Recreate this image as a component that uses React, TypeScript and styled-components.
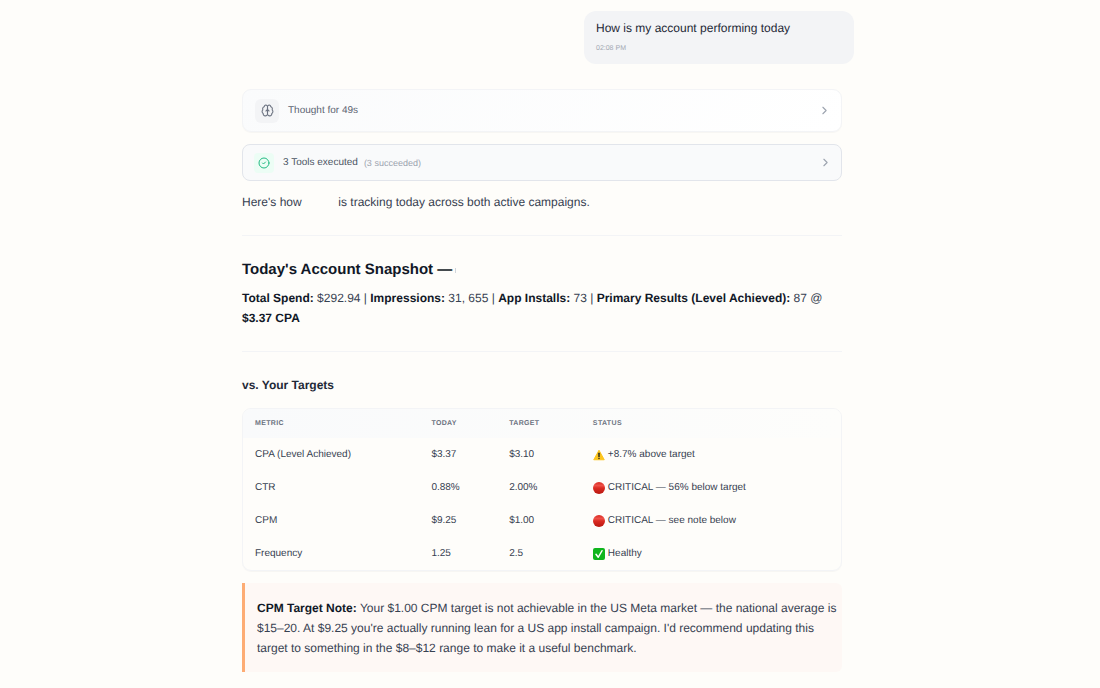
import React from "react";
import styled, { createGlobalStyle } from "styled-components";

const GlobalStyle = createGlobalStyle`
  *, *::before, *::after { box-sizing: border-box; }
  body {
    margin: 0;
    background: #fefdfa;
    color: #374151;
    font-family: "Liberation Sans", Arial, sans-serif;
    text-rendering: geometricPrecision;
  }
`;

const Page = styled.main`
  display: flex;
  justify-content: center;
  padding: 11px 16px 16px 12px;
`;

const Conversation = styled.div`
  display: flex;
  flex-direction: column;
  width: 100%;
  max-width: 612px;
`;

const UserMessage = styled.div`
  align-self: flex-end;
  width: 270px;
  max-width: 100%;
  padding: 8px 12px 9px;
  border-radius: 12px;
  background: #f3f4f6;
`;

const UserText = styled.p`
  margin: 0;
  font-size: 12px;
  line-height: 18px;
  color: #1f2937;
`;

const Timestamp = styled.time`
  display: block;
  margin-top: 6px;
  font-size: 7px;
  line-height: 12px;
  color: #a3a8b3;
`;

const Reply = styled.article`
  display: flex;
  flex-direction: column;
  margin: 25px 12px 0 0;
`;

const Steps = styled.div`
  display: flex;
  flex-direction: column;
  gap: 12px;
`;

const Step = styled.button<{ $solid?: boolean }>`
  display: flex;
  align-items: center;
  width: 100%;
  height: ${(p) => (p.$solid ? 37 : 43)}px;
  padding: ${(p) => (p.$solid ? "0 9px 0 11px" : "0 10px 0 12px")};
  border: 1px solid ${(p) => (p.$solid ? "#e2e5eb" : "#f3f4f6")};
  border-radius: ${(p) => (p.$solid ? 8 : 9)}px;
  background: ${(p) => (p.$solid ? "#f9fafb" : "linear-gradient(135deg, #fafbfc, #ffffff)")};
  box-shadow: ${(p) => (p.$solid ? "none" : "0 1px 1px rgba(0, 0, 0, 0.03)")};
  font: inherit;
  text-align: left;
  text-rendering: inherit;
  cursor: pointer;
`;

const StepIcon = styled.span<{ $success?: boolean }>`
  display: flex;
  flex: none;
  align-items: center;
  justify-content: center;
  width: ${(p) => (p.$success ? 20 : 24)}px;
  height: ${(p) => (p.$success ? 20 : 24)}px;
  border-radius: ${(p) => (p.$success ? 4 : 6)}px;
  background: ${(p) => (p.$success ? "#ecfdf5" : "#f3f4f6")};
  color: ${(p) => (p.$success ? "#22ba83" : "#6b7280")};
`;

const StepLabel = styled.span<{ $strong?: boolean }>`
  margin-left: 9px;
  font-size: 10px;
  line-height: 14px;
  color: ${(p) => (p.$strong ? "#4b5563" : "#5b6472")};
`;

const StepDetail = styled.span`
  margin-left: 6px;
  font-size: 9px;
  line-height: 14px;
  color: #9ca3af;
`;

const StepArrow = styled.span`
  display: flex;
  margin-left: auto;
  color: #9ca3af;
`;

const Paragraph = styled.p`
  margin: 0;
  font-size: 12px;
  line-height: 20px;
  color: #374151;

  strong {
    color: #111827;
  }
`;

const Intro = styled(Paragraph)`
  margin-top: 11px;
`;

const BlankName = styled.span`
  display: inline-block;
  width: 30px;
`;

const Divider = styled.hr`
  width: 100%;
  height: 1px;
  margin: 23px 0;
  border: 0;
  background: #f3f4f6;
`;

const SectionTitle = styled.h2`
  display: flex;
  align-items: center;
  gap: 3px;
  margin: 0 0 7px;
  font-size: 15px;
  line-height: 22px;
  color: #111827;
`;

const NameEdge = styled.span`
  width: 1px;
  height: 5px;
  background: #d1d5db;
`;

const TargetsTitle = styled.h3`
  margin: 0 0 13px;
  font-size: 12px;
  line-height: 20px;
  color: #1f2937;
`;

const TableFrame = styled.div`
  overflow: hidden;
  border: 1px solid #f3f4f6;
  border-radius: 9px;
  box-shadow: 0 1px 1px rgba(0, 0, 0, 0.03);
`;

const Table = styled.table`
  width: 100%;
  border-collapse: collapse;
  table-layout: fixed;
`;

const HeadRow = styled.tr`
  height: 29px;
  background: linear-gradient(90deg, #f9fafb, #fdfdfb);
`;

const HeadCell = styled.th<{ $width: string }>`
  width: ${(p) => p.$width};
  padding: 0 12px;
  font-size: 7px;
  line-height: 12px;
  letter-spacing: 0.05em;
  text-align: left;
  text-transform: uppercase;
  color: #6b7280;
`;

const Cell = styled.td`
  height: 33px;
  padding: 0 12px;
  font-size: 10px;
  line-height: 16px;
  color: #374151;
`;

const Status = styled.span`
  display: flex;
  align-items: center;
  gap: 3px;

  svg {
    flex: none;
  }
`;

const Note = styled.blockquote`
  margin: 12px 0 0;
  padding: 15px 3px 14px 12px;
  border-left: 3px solid #fdac74;
  border-radius: 0 6px 6px 0;
  background: #fef8f5;
`;

const BrainIcon = () => (
  <svg width="13" height="13" viewBox="0 0 24 24" fill="none" stroke="currentColor" strokeWidth="2" strokeLinecap="round" strokeLinejoin="round" aria-hidden="true">
    <path d="M12 5a3 3 0 1 0-5.997.125 4 4 0 0 0-2.526 5.77 4 4 0 0 0 .556 6.588A4 4 0 1 0 12 18Z" />
    <path d="M12 5a3 3 0 1 1 5.997.125 4 4 0 0 1 2.526 5.77 4 4 0 0 1-.556 6.588A4 4 0 1 1 12 18Z" />
    <path d="M15 13a4.5 4.5 0 0 1-3-4 4.5 4.5 0 0 1-3 4" />
  </svg>
);

const SuccessIcon = () => (
  <svg width="12" height="12" viewBox="0 0 24 24" fill="none" stroke="currentColor" strokeWidth="2" strokeLinecap="round" strokeLinejoin="round" aria-hidden="true">
    <circle cx="12" cy="12" r="10" />
    <path d="m9 12 2 2 4-4" />
  </svg>
);

const ChevronIcon = () => (
  <svg width="13" height="13" viewBox="0 0 24 24" fill="none" stroke="currentColor" strokeWidth="2" strokeLinecap="round" strokeLinejoin="round" aria-hidden="true">
    <path d="m9 18 6-6-6-6" />
  </svg>
);

const WarningIcon = () => (
  <svg width="12" height="12" viewBox="0 0 24 24" role="img" aria-label="Warning">
    <path d="M12 2.5 22.5 21.5H1.5Z" fill="#fdc51c" stroke="#fdc51c" strokeWidth="2" strokeLinejoin="round" />
    <path d="M10.6 8h2.8l-.5 8h-1.8Z" fill="#33301f" stroke="#33301f" strokeLinejoin="round" />
    <circle cx="12" cy="19" r="1.6" fill="#33301f" />
  </svg>
);

const CriticalIcon = () => (
  <svg width="12" height="12" viewBox="0 0 24 24" role="img" aria-label="Critical">
    <defs>
      <linearGradient id="critical-fill" x1="0" y1="0" x2="0" y2="1">
        <stop offset="0" stopColor="#d92b22" />
        <stop offset="0.3" stopColor="#ee5148" />
        <stop offset="0.5" stopColor="#db2b22" />
        <stop offset="1" stopColor="#b8170f" />
      </linearGradient>
    </defs>
    <circle cx="12" cy="12" r="12" fill="url(#critical-fill)" />
  </svg>
);

const HealthyIcon = () => (
  <svg width="12" height="12" viewBox="0 0 24 24" role="img" aria-label="Healthy">
    <rect width="24" height="24" rx="4" fill="#0fb51d" />
    <path d="m6 12.5 4.5 6L18 5.5" fill="none" stroke="#ffffff" strokeWidth="3" strokeLinecap="round" strokeLinejoin="round" />
  </svg>
);

const columns = [
  { label: "Metric", width: "29.5%" },
  { label: "Today", width: "13%" },
  { label: "Target", width: "14%" },
  { label: "Status", width: "43.5%" },
];

const metrics = [
  { name: "CPA (Level Achieved)", today: "$3.37", target: "$3.10", Icon: WarningIcon, status: "+8.7% above target" },
  { name: "CTR", today: "0.88%", target: "2.00%", Icon: CriticalIcon, status: "CRITICAL — 56% below target" },
  { name: "CPM", today: "$9.25", target: "$1.00", Icon: CriticalIcon, status: "CRITICAL — see note below" },
  { name: "Frequency", today: "1.25", target: "2.5", Icon: HealthyIcon, status: "Healthy" },
];

export default function App() {
  return (
    <>
      <GlobalStyle />
      <Page>
        <Conversation>
          <UserMessage>
            <UserText>How is my account performing today</UserText>
            <Timestamp dateTime="14:08">02:08 PM</Timestamp>
          </UserMessage>

          <Reply>
            <Steps>
              <Step type="button">
                <StepIcon><BrainIcon /></StepIcon>
                <StepLabel>Thought for 49s</StepLabel>
                <StepArrow><ChevronIcon /></StepArrow>
              </Step>
              <Step type="button" $solid>
                <StepIcon $success><SuccessIcon /></StepIcon>
                <StepLabel $strong>3 Tools executed</StepLabel>
                <StepDetail>(3 succeeded)</StepDetail>
                <StepArrow><ChevronIcon /></StepArrow>
              </Step>
            </Steps>

            <Intro>
              Here's how <BlankName /> is tracking today across both active campaigns.
            </Intro>

            <Divider />

            <SectionTitle>
              Today's Account Snapshot —
              <NameEdge />
            </SectionTitle>
            <Paragraph>
              <strong>Total Spend:</strong> $292.94 | <strong>Impressions:</strong> 31, 655 |{" "}
              <strong>App Installs:</strong> 73 | <strong>Primary Results (Level Achieved):</strong> 87 @{" "}
              <strong>$3.37 CPA</strong>
            </Paragraph>

            <Divider />

            <TargetsTitle>vs. Your Targets</TargetsTitle>
            <TableFrame>
              <Table>
                <thead>
                  <HeadRow>
                    {columns.map((c) => (
                      <HeadCell key={c.label} scope="col" $width={c.width}>{c.label}</HeadCell>
                    ))}
                  </HeadRow>
                </thead>
                <tbody>
                  {metrics.map(({ name, today, target, Icon, status }) => (
                    <tr key={name}>
                      <Cell>{name}</Cell>
                      <Cell>{today}</Cell>
                      <Cell>{target}</Cell>
                      <Cell><Status><Icon />{status}</Status></Cell>
                    </tr>
                  ))}
                </tbody>
              </Table>
            </TableFrame>

            <Note>
              <Paragraph>
                <strong>CPM Target Note:</strong> Your $1.00 CPM target is not achievable in the US Meta market — the national average is $15–20. At $9.25 you're actually running lean for a US app install campaign. I'd recommend updating this target to something in the $8–$12 range to make it a useful benchmark.
              </Paragraph>
            </Note>
          </Reply>
        </Conversation>
      </Page>
    </>
  );
}
